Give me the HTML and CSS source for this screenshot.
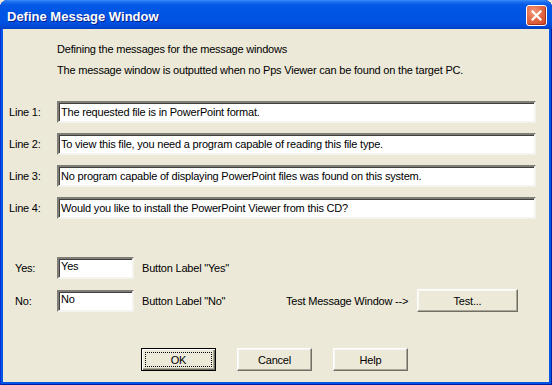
FILE: index.html
```html
<!DOCTYPE html>
<html lang="en">
<head>
    <meta charset="UTF-8">
    <title>Define Message Window</title>
    <link rel="stylesheet" href="styles.css">
</head>
<body>
    <div class="window">
        <div class="titlebar">
            <span class="title">Define Message Window</span>
            <button class="close" type="button" aria-label="Close">
                <svg width="11" height="11" viewBox="0 0 11 11">
                    <path d="M1.5 1.5 L9.5 9.5 M9.5 1.5 L1.5 9.5" stroke="#fff" stroke-width="2.2" stroke-linecap="square"/>
                </svg>
            </button>
        </div>
        <div class="client">
            <div class="intro">
                <p>Defining the messages for the message windows</p>
                <p>The message window is outputted when no Pps Viewer can be found on the target PC.</p>
            </div>

            <div class="lines">
                <label for="line1">Line 1:</label>
                <input type="text" id="line1" class="field" value="The requested file is in PowerPoint format.">
                <label for="line2">Line 2:</label>
                <input type="text" id="line2" class="field" value="To view this file, you need a program capable of reading this file type.">
                <label for="line3">Line 3:</label>
                <input type="text" id="line3" class="field" value="No program capable of displaying PowerPoint files was found on this system.">
                <label for="line4">Line 4:</label>
                <input type="text" id="line4" class="field" value="Would you like to install the PowerPoint Viewer from this CD?">
            </div>

            <div class="options">
                <label for="yes">Yes:</label>
                <input type="text" id="yes" class="field short" value="Yes">
                <span class="desc">Button Label "Yes"</span>
                <span></span>
                <span></span>

                <label for="no">No:</label>
                <input type="text" id="no" class="field short" value="No">
                <span class="desc">Button Label "No"</span>
                <span class="test-label">Test Message Window --&gt;</span>
                <button type="button" class="btn test">Test...</button>
            </div>

            <div class="actions">
                <button type="button" class="btn default"><span class="focus">OK</span></button>
                <button type="button" class="btn">Cancel</button>
                <button type="button" class="btn">Help</button>
            </div>
        </div>
    </div>
</body>
</html>
```

FILE: styles.css
```css
* {
    box-sizing: border-box;
    margin: 0;
    padding: 0;
}
body {
    font-family: 'Liberation Sans', Arial, sans-serif;
    font-size: 11px;
    letter-spacing: -0.2px;
    color: #000;
    background-color: #ece9d8;
}
.window {
    width: 552px;
    height: 385px;
    display: flex;
    flex-direction: column;
    background-color: #0055e5;
    border-radius: 8px 8px 0 0;
    box-shadow: inset 1px 0 #0831d9, inset -1px 0 #001ea0, inset 0 -1px #001ea0;
}
.titlebar {
    height: 29px;
    display: flex;
    align-items: center;
    justify-content: space-between;
    padding: 0 5px 0 7px;
    border-radius: 8px 8px 0 0;
    background: linear-gradient(to bottom, #3c8ff8 0, #1a6ef0 2px, #0559e6 5px, #0055e5 40%, #0052e2 75%, #0049d6 92%, #003ec0 100%);
}
.title {
    font-family: 'Liberation Sans', Arial, sans-serif;
    font-weight: bold;
    font-size: 13px;
    letter-spacing: 0;
    color: #fff;
    text-shadow: 1px 1px #0a1e8a;
    margin-top: 3px;
}
.close {
    width: 21px;
    height: 21px;
    display: flex;
    align-items: center;
    justify-content: center;
    border: 1px solid #fff;
    border-radius: 3px;
    background: radial-gradient(circle at 35% 30%, #f39a7c 0, #e46a45 45%, #cc4422 100%);
    box-shadow: inset -1px -1px #a8321a;
    margin-top: 2px;
}
.client {
    flex: 1;
    margin: 0 3px 3px;
    background-color: #ece9d8;
    padding: 10px 0 0 6px;
}
.intro {
    padding-left: 48px;
}
.intro p {
    line-height: 21px;
}
.lines {
    display: grid;
    grid-template-columns: 48px 479px;
    row-gap: 10px;
    align-items: center;
    margin-top: 20px;
}
.field {
    height: 22px;
    font-family: inherit;
    font-size: 11px;
    letter-spacing: -0.2px;
    color: #000;
    background-color: #fff;
    padding: 0 2px;
    border: 2px solid;
    border-color: #7f7d75 #f4f3ee #f4f3ee #7f7d75;
    box-shadow: inset 1px 1px #404040;
    outline: none;
}
.field.short {
    padding-bottom: 4px;
}
.options {
    display: grid;
    grid-template-columns: 42px 77px 152px 131px 101px;
    grid-template-rows: 22px 23px;
    row-gap: 10px;
    align-items: center;
    margin-top: 38px;
    padding-left: 6px;
}
.desc {
    padding-left: 8px;
}
.btn {
    height: 23px;
    font-family: inherit;
    font-size: 11px;
    letter-spacing: -0.2px;
    color: #000;
    background-color: #ece9d8;
    border: 1px solid;
    border-color: #fff #716f64 #716f64 #fff;
    box-shadow: inset -1px -1px #aca899, inset 1px 1px #f7f6f0;
}
.actions {
    display: flex;
    gap: 21px;
    margin-top: 36px;
    padding-left: 132px;
}
.actions .btn {
    width: 75px;
}
.btn.default {
    border: 1px solid #000;
    box-shadow: inset 1px 1px #fff, inset -1px -1px #716f64, inset -2px -2px #aca899;
    padding: 3px;
}
.focus {
    display: flex;
    align-items: center;
    justify-content: center;
    height: 100%;
    border: 1px dotted #000;
}
```
